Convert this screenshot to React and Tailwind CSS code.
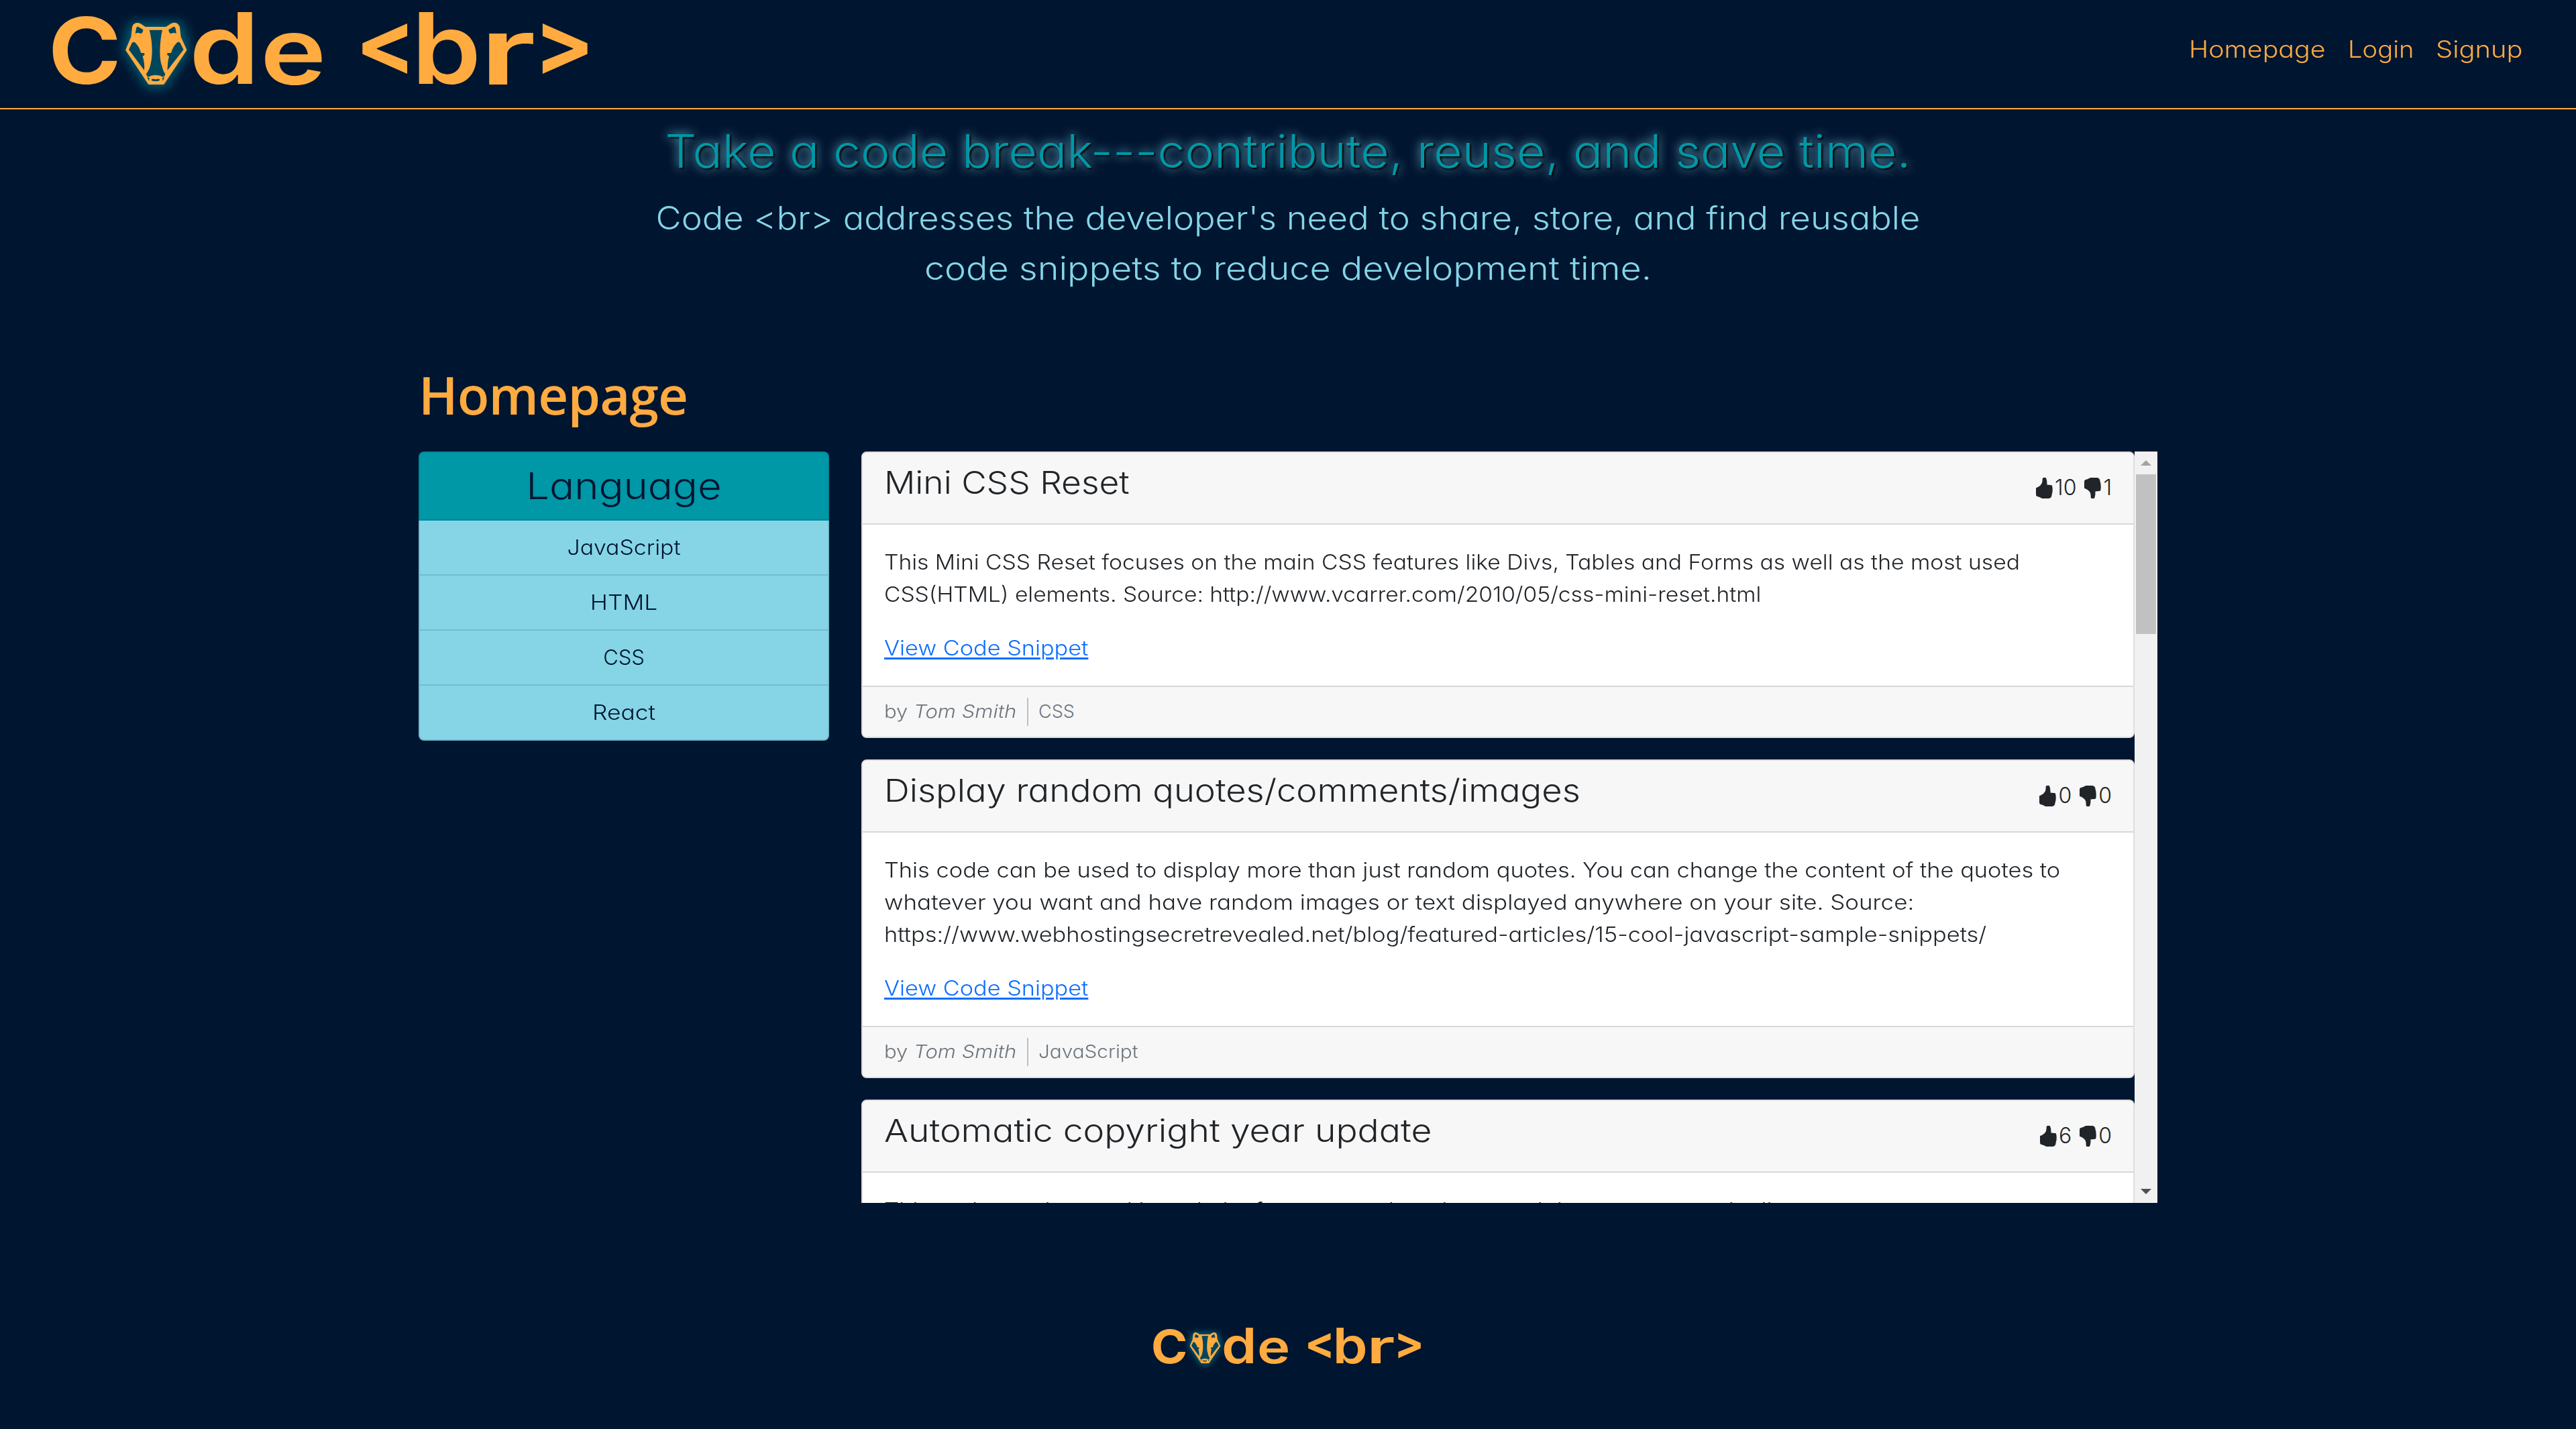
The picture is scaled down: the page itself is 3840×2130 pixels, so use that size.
import React from "react";

function Logo({ id, className }) {
  return (
    <svg viewBox="0 0 962 150" className={className} role="img">
      <defs>
        <filter id={id} x="-50%" y="-50%" width="200%" height="200%">
          <feGaussianBlur stdDeviation="26" />
        </filter>
      </defs>
      <g fill="#ffab40" fontFamily="Inter, sans-serif" fontSize="140">
        <text fontWeight="700" transform="translate(72 125) scale(1.049 0.98)">C</text>
        <text fontWeight="600" transform="translate(282 125) scale(1.2 1.05)">d</text>
        <text fontWeight="600" transform="translate(388 125) scale(1.189 0.98)">e</text>
        <text fontWeight="700" transform="translate(529.5 111) scale(0.957 0.95)">&lt;</text>
        <text fontWeight="600" transform="translate(613.5 125) scale(1.187 1.05)">b</text>
        <text fontWeight="600" transform="translate(715 126) scale(1.51 1)">r</text>
        <text fontWeight="700" transform="translate(795.6 111) scale(0.957 0.95)">&gt;</text>
      </g>
      <g transform="translate(160 0) scale(0.3333)">
        <path d="M105 110H330L360 223L255 385H182L78 223Z" fill="#00a0b4" stroke="#00a0b4" strokeWidth="20" opacity=".5" filter={`url(#${id})`} />
        <path d="M112 167L117 122Q124 102 144 110L168 126H264L289 110Q310 102 318 122L323 167L349 223L250 372H187L88 223Z" fill="#ffab40" stroke="#ffab40" strokeWidth="12" strokeLinejoin="round" />
        <g fill="#00475e">
          <path d="M188 134H246C236 175 230 255 243 290Q249 318 259 330L256 340Q245 347 240 340Q216 332 192 340Q186 347 177 340L174 330Q190 310 194 285C205 240 200 175 188 134Z" />
          <path d="M125 150L130 124Q134 116 142 122L160 133Q160 147 150 151Q137 144 125 150Z" />
          <path d="M309 150L304 124Q300 116 292 122L274 133Q274 147 284 151Q297 144 309 150Z" />
          <path d="M96 222L110 192Q118 183 126 192Q145 212 150 236L166 238V246L158 251Q168 285 165 314Z" />
          <path d="M341 222L326 192Q318 183 310 192Q291 212 286 236L268 238V246L276 251Q268 285 269 314Z" />
          <path d="M178 344L188 349L186 362Z" />
          <path d="M256 344L246 349L248 362Z" />
          <ellipse cx="216" cy="357" rx="19" ry="6" />
        </g>
        <path d="M202 352Q216 344 230 352Q216 357 202 352Z" fill="#ffab40" />
      </g>
    </svg>
  );
}

function Thumb({ down }) {
  return (
    <svg viewBox="0 0 76 94" className={down ? "h-[31px] w-[25px] -scale-y-100" : "h-[31px] w-[25px]"} fill="#212529">
      <path d="M30 2Q31 0 35 0H45Q51 12 50 32L72 34Q76 40 75 58Q75 70 72 76Q71 86 68 89Q64 94 58 94H28L16 88L4 84Q0 82 0 76V46Q12 42 20 35Q30 26 29 12Z" />
    </svg>
  );
}

const links = [
  ["Homepage", "w-[237px]", "scale-x-[1.125]"],
  ["Login", "w-[131px]", "scale-x-[1.09]"],
  ["Signup", "w-[132px]", "scale-x-[1.14]"],
];

const languages = [
  ["JavaScript", "scale-x-[1.09]"],
  ["HTML", "scale-x-[1.14]"],
  ["CSS", "scale-x-100"],
  ["React", "scale-x-[1.14]"],
];

const snippets = [
  {
    title: ["Mini CSS Reset", "scale-x-[1.107]"],
    up: 10,
    down: 1,
    language: ["CSS", "scale-x-100"],
    lines: [
      ["This Mini CSS Reset focuses on the main CSS features like Divs, Tables and Forms as well as the most used", "scale-x-[1.085]"],
      ["CSS(HTML) elements. Source: http://www.vcarrer.com/2010/05/css-mini-reset.html", "scale-x-[1.082]"],
    ],
  },
  {
    title: ["Display random quotes/comments/images", "scale-x-[1.129]"],
    up: 0,
    down: 0,
    language: ["JavaScript", "scale-x-[1.1]"],
    lines: [
      ["This code can be used to display more than just random quotes. You can change the content of the quotes to", "scale-x-[1.109]"],
      ["whatever you want and have random images or text displayed anywhere on your site. Source:", "scale-x-[1.128]"],
      ["https://www.webhostingsecretrevealed.net/blog/featured-articles/15-cool-javascript-sample-snippets/", "scale-x-[1.109]"],
    ],
  },
  {
    title: ["Automatic copyright year update", "scale-x-[1.149]"],
    up: 6,
    down: 0,
    language: ["JavaScript", "scale-x-[1.1]"],
    lines: [["This code can be used in website footer to update the copyright year automatically.", "scale-x-[1.12]"]],
  },
];

function Card({ snippet }) {
  const [title, titleStretch] = snippet.title;
  const [language, languageStretch] = snippet.language;
  return (
    <article className="mb-8 shrink-0 overflow-hidden rounded-lg border-2 border-[#dfdfdf] bg-white">
      <header className="flex h-[107px] justify-between border-b-2 border-[#d8d8d8] bg-[#f7f7f7] px-8 pt-[15px]">
        <h4 className={`origin-left text-[46.5px] leading-[58px] ${titleStretch}`}>{title}</h4>
        <div className="mt-[13px] flex h-12 gap-3 text-[32px] leading-[48px]">
          <span className="flex gap-[3px]"><span className="pt-[9px]"><Thumb /></span>{snippet.up}</span>
          <span className="flex gap-[3px]"><span className="pt-[9px]"><Thumb down /></span>{snippet.down}</span>
        </div>
      </header>
      <div className="p-8 text-[31px] leading-[48px]">
        <p className="mb-8">
          {snippet.lines.map(([line, stretch]) => (
            <span key={line} className={`block w-fit origin-left whitespace-nowrap ${stretch}`}>{line}</span>
          ))}
        </p>
        <a className="block w-fit origin-left scale-x-[1.105] text-[#0d6efd] underline decoration-[3px] underline-offset-[3px]">View Code Snippet</a>
      </div>
      <footer className="flex h-[76px] border-t-2 border-[#d8d8d8] bg-[#f7f7f7] px-8 py-4 text-[27px] leading-[42px] text-[#6c757d]">
        <div className="w-[215px] border-r-2 border-[#c0c0c0]">
          <span className="block w-fit origin-left scale-x-[1.15] whitespace-nowrap">by <i>Tom Smith</i></span>
        </div>
        <span className={`ml-[15px] origin-left ${languageStretch}`}>{language}</span>
      </footer>
    </article>
  );
}

function ScrollArrow({ d, className }) {
  return (
    <div className={className}>
      <svg viewBox="0 0 16 8" className="h-2 w-4" fill="currentColor"><path d={d} /></svg>
    </div>
  );
}

export default function App() {
  return (
    <div className="h-[2130px] overflow-hidden bg-[#001530] font-['Inter',sans-serif] font-light text-[#212529] [font-feature-settings:'cv11']">
      <header className="flex h-[163px] items-start justify-between border-b-2 border-[#ffab40] pr-[77px]">
        <Logo id="glow-header" className="h-[150px] w-[962px] overflow-visible" />
        <nav className="flex pt-[49px] text-[35px] leading-[48px] text-[#ffab40]">
          {links.map(([name, width, stretch]) => (
            <div key={name} className={width}>
              <a className={`block w-fit origin-left ${stretch}`}>{name}</a>
            </div>
          ))}
        </nav>
      </header>
      <section className="pt-5 text-center">
        <h2 className="scale-x-[1.08] text-[68px] leading-[84px] text-[#0097a7] [text-shadow:2px_2px_3px_#000,0_0_14px_#84d5e7]">Take a code break---contribute, reuse, and save time.</h2>
        <p className="mt-5 text-[48px] leading-[75px] text-[#84d5e7]">
          <span className="block scale-x-[1.091]">{"Code <br> addresses the developer's need to share, store, and find reusable"}</span>
          <span className="block scale-x-[1.123]">code snippets to reduce development time.</span>
        </p>
      </section>
      <main className="mx-[624px] mt-[103px]">
        <h1 className="font-['Open_Sans',sans-serif] text-[78px] font-semibold leading-[96px] tracking-[-0.8px] text-[#ffab40]">Homepage</h1>
        <div className="mt-[37px] flex items-start gap-12">
          <aside className="w-[612px] text-center text-[#001530]">
            <h3 className="h-[103px] rounded-t-lg border-2 border-[#008896] bg-[#0097a7] pt-4 text-[55px] leading-[66px]">
              <span className="block scale-x-[1.12]">Language</span>
            </h3>
            <ul className="rounded-b-lg border-x-2 border-b-2 border-[#74bbca] bg-[#86d5e7]">
              {languages.map(([name, stretch]) => (
                <li key={name} className="border-b-2 border-[#74bbca] py-4 text-[31px] leading-[48px] last:border-b-0">
                  <span className={`block ${stretch}`}>{name}</span>
                </li>
              ))}
            </ul>
          </aside>
          <div className="flex h-[1120px] w-[1932px] overflow-hidden">
            <div className="flex flex-1 flex-col overflow-hidden">
              {snippets.map((snippet) => <Card key={snippet.title[0]} snippet={snippet} />)}
            </div>
            <div className="flex w-[34px] flex-col items-center bg-[#f1f1f1]">
              <ScrollArrow d="M0 8L8 0L16 8Z" className="flex h-[34px] items-center text-[#a3a3a3]" />
              <div className="h-[238px] w-[30px] bg-[#c1c1c1]" />
              <ScrollArrow d="M0 0L8 8L16 0Z" className="mt-auto flex h-[34px] items-center text-[#505050]" />
            </div>
          </div>
        </div>
      </main>
      <footer className="mt-[176px] flex justify-center">
        <Logo id="glow-footer" className="h-[75px] w-[483px] overflow-visible" />
      </footer>
    </div>
  );
}
